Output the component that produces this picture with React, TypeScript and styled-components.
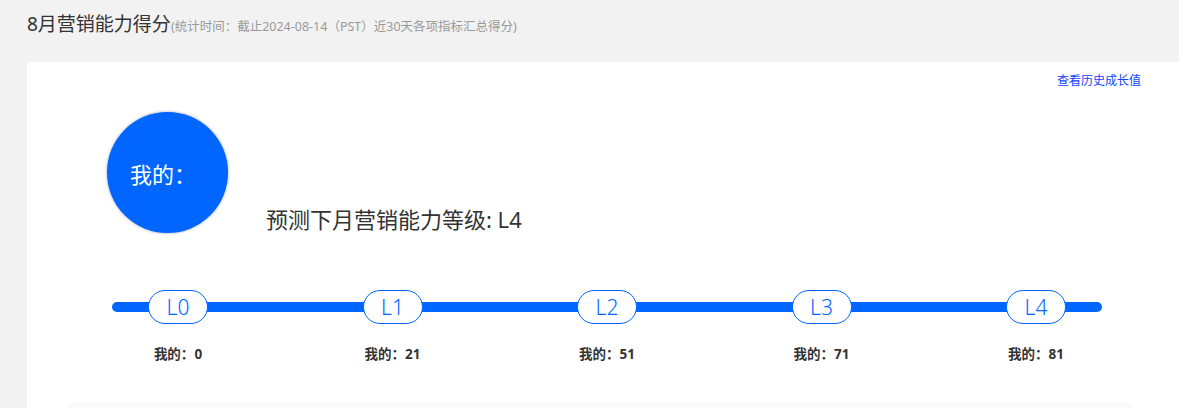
import React from "react";
import styled, { createGlobalStyle } from "styled-components";

const GlobalStyle = createGlobalStyle`
  html, body {
    margin: 0;
    padding: 0;
    background: #f2f2f2;
    overflow: hidden;
  }
  body {
    font-family: "Noto Sans", "Noto Sans CJK SC", sans-serif;
    color: #333;
  }
`;

const Page = styled.div`
  width: 1179px;
  height: 408px;
  padding-left: 27px;
  box-sizing: border-box;
  overflow: hidden;
`;

const Header = styled.div`
  height: 62px;
  display: flex;
  align-items: baseline;
  padding-top: 10px;
  box-sizing: border-box;
`;

const Title = styled.h1`
  margin: 0;
  font-size: 19px;
  font-weight: 400;
  color: #333;
  line-height: 28px;
  font-family: "Noto Sans", "Noto Sans CJK SC", sans-serif;
`;

const Subtitle = styled.span`
  font-size: 12.5px;
  color: #999;
  font-family: "Noto Sans", "Noto Sans CJK SC", sans-serif;
`;

const Card = styled.div`
  background: #fff;
  border-radius: 4px 0 0 0;
  padding-top: 9px;
  height: 400px;
  box-sizing: border-box;
`;

const LinkRow = styled.div`
  display: flex;
  justify-content: flex-end;
  padding-right: 38px;
`;

const HistoryLink = styled.a`
  font-size: 12px;
  line-height: 17px;
  color: #1145ff;
  text-decoration: none;
  cursor: pointer;
  font-family: "Noto Sans CJK SC", sans-serif;
`;

const Summary = styled.div`
  display: flex;
  align-items: flex-end;
  margin-top: 24px;
  padding-left: 80px;
  gap: 38px;
`;

const Circle = styled.div`
  width: 121px;
  height: 121px;
  border-radius: 50%;
  background: #0066ff;
  box-shadow: 0 0 3px rgba(0, 40, 120, 0.45);
  display: flex;
  align-items: center;
  padding-left: 23px;
  box-sizing: border-box;
  color: #fff;
  font-size: 22px;
  font-family: "Noto Sans CJK SC", sans-serif;
`;

const Prediction = styled.div`
  font-size: 22px;
  line-height: 28px;
  color: #333;
  font-family: "Noto Sans", "Noto Sans CJK SC", sans-serif;
`;

const Track = styled.div`
  margin: 69px 0 0 85px;
  width: 990px;
  height: 10px;
  border-radius: 5px;
  background: #0066ff;
  display: flex;
  align-items: center;
  justify-content: space-between;
  padding: 0 36px;
  box-sizing: border-box;
`;

const Pill = styled.div`
  flex: none;
  width: 60px;
  height: 34px;
  box-sizing: border-box;
  border: 1px solid #0066ff;
  border-radius: 17px;
  background: #fff;
  color: #0066ff;
  font-size: 21px;
  font-weight: 300;
  display: flex;
  align-items: center;
  justify-content: center;
  font-family: "Noto Sans", sans-serif;
`;

const Labels = styled.div`
  margin: 33px 0 0 85px;
  width: 990px;
  display: flex;
  justify-content: space-between;
  padding: 0 36px;
  box-sizing: border-box;
`;

const Label = styled.div`
  width: 60px;
  display: flex;
  justify-content: center;
  white-space: nowrap;
  font-size: 13.5px;
  line-height: 18px;
  font-weight: 700;
  color: #333;
  font-family: "Noto Sans", "Noto Sans CJK SC", sans-serif;
`;

const Panel = styled.div`
  margin: 39px 0 0 41px;
  width: 1064px;
  height: 40px;
  background: #fafafa;
  border-radius: 6px;
`;

const levels = [
  { name: "L0", score: 0 },
  { name: "L1", score: 21 },
  { name: "L2", score: 51 },
  { name: "L3", score: 71 },
  { name: "L4", score: 81 },
];

export default function App() {
  return (
    <>
      <GlobalStyle />
      <Page>
        <Header>
          <Title>8月营销能力得分</Title>
          <Subtitle>(统计时间：截止2024-08-14（PST）近30天各项指标汇总得分)</Subtitle>
        </Header>
        <Card>
          <LinkRow>
            <HistoryLink>查看历史成长值</HistoryLink>
          </LinkRow>
          <Summary>
            <Circle>我的：</Circle>
            <Prediction>预测下月营销能力等级: L4</Prediction>
          </Summary>
          <Track>
            {levels.map((l) => (
              <Pill key={l.name}>{l.name}</Pill>
            ))}
          </Track>
          <Labels>
            {levels.map((l) => (
              <Label key={l.name}>我的：{l.score}</Label>
            ))}
          </Labels>
          <Panel />
        </Card>
      </Page>
    </>
  );
}
